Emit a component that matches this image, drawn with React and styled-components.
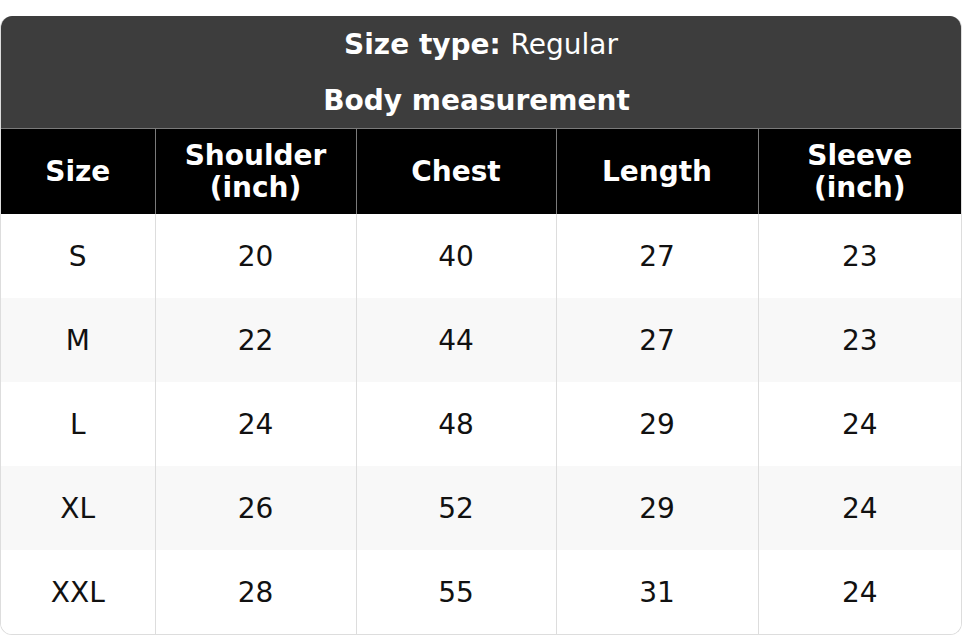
import styled, { createGlobalStyle } from 'styled-components';

const GlobalStyle = createGlobalStyle`
  html, body {
    margin: 0;
    padding: 0;
    background: #ffffff;
  }
  body {
    font-family: "DejaVu Sans", Verdana, sans-serif;
  }
`;

const Wrapper = styled.div`
  margin-top: 16px;
  width: 962px;
  box-sizing: border-box;
  border: 1px solid #dddddd;
  border-top: none;
  border-radius: 12px;
  overflow: hidden;
`;

const Table = styled.table`
  width: 100%;
  border-collapse: collapse;
  table-layout: fixed;
  font-size: 28px;
`;

const TitleCell = styled.th`
  background: #3d3d3d;
  color: #ffffff;
  height: 56px;
  padding: 0 ${({ $last }) => ($last ? '9px' : '0')} 0 0;
  text-align: center;
  font-weight: 700;
  border-bottom: ${({ $last }) => ($last ? '1px solid #7a7a7a' : 'none')};
`;

const Light = styled.span`
  font-weight: 400;
`;

const HeadCell = styled.th`
  background: #000000;
  color: #ffffff;
  height: 85px;
  padding: 0 8px;
  text-align: center;
  font-weight: 700;
  line-height: 32px;
  border-right: 1px solid #7a7a7a;

  &:last-child {
    border-right: none;
  }
`;

const Row = styled.tr`
  background: ${({ $odd }) => ($odd ? '#f8f8f8' : '#ffffff')};
`;

const Cell = styled.td`
  height: 84px;
  padding: 0;
  text-align: center;
  color: #111111;
  border-right: 1px solid #dddddd;

  &:last-child {
    border-right: none;
  }
`;

const widths = [154, 201, 200, 202, 203];

const rows = [
  ['S', 20, 40, 27, 23],
  ['M', 22, 44, 27, 23],
  ['L', 24, 48, 29, 24],
  ['XL', 26, 52, 29, 24],
  ['XXL', 28, 55, 31, 24],
];

export default function App() {
  return (
    <>
      <GlobalStyle />
      <Wrapper>
        <Table>
          <colgroup>
            {widths.map((w, i) => (
              <col key={i} style={{ width: w }} />
            ))}
          </colgroup>
          <thead>
            <tr>
              <TitleCell colSpan={5}>
                Size type: <Light>Regular</Light>
              </TitleCell>
            </tr>
            <tr>
              <TitleCell colSpan={5} $last>Body measurement</TitleCell>
            </tr>
            <tr>
              <HeadCell>Size</HeadCell>
              <HeadCell>Shoulder<br />(inch)</HeadCell>
              <HeadCell>Chest</HeadCell>
              <HeadCell>Length</HeadCell>
              <HeadCell>Sleeve<br />(inch)</HeadCell>
            </tr>
          </thead>
          <tbody>
            {rows.map((r, i) => (
              <Row key={r[0]} $odd={i % 2 === 1}>
                {r.map((v, j) => (
                  <Cell key={j}>{v}</Cell>
                ))}
              </Row>
            ))}
          </tbody>
        </Table>
      </Wrapper>
    </>
  );
}
